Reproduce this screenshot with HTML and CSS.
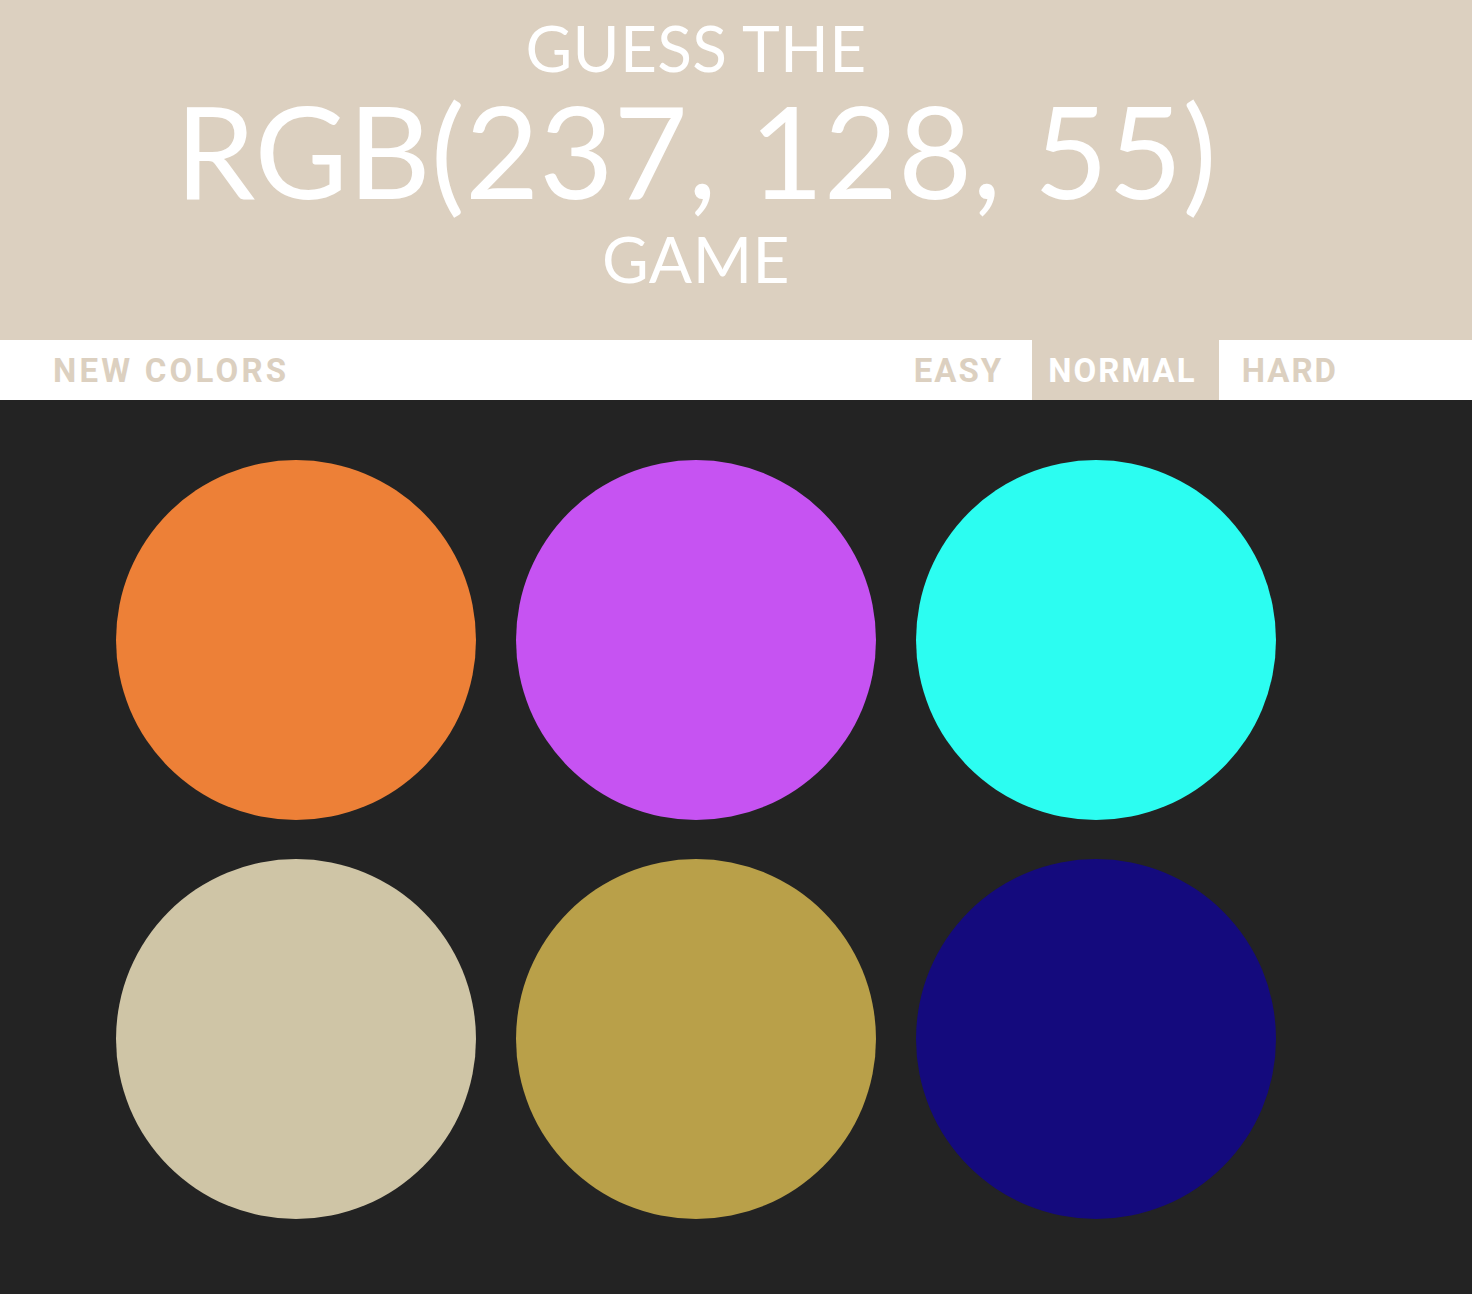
FILE: index.html
```html
<!DOCTYPE html>
<html lang="en">
<head>
<meta charset="utf-8">
<title>Colour Game</title>
<link rel="stylesheet" href="styles.css">
</head>
<body>
  <header class="header">
    <div class="frame">
      <h1 class="title">
        <span class="title-small">GUESS THE</span>
        <span class="title-big">RGB(237, 128, 55)</span>
        <span class="title-game">GAME</span>
      </h1>
    </div>
  </header>
  <nav class="nav">
    <div class="frame nav-inner">
      <button class="btn btn-new">NEW COLORS</button>
      <span class="msg"></span>
      <div class="modes">
        <button class="btn">EASY</button>
        <button class="btn btn-active">NORMAL</button>
        <button class="btn">HARD</button>
      </div>
    </div>
  </nav>
  <main class="frame board">
    <div class="grid">
      <div class="square c1"></div>
      <div class="square c2"></div>
      <div class="square c3"></div>
      <div class="square c4"></div>
      <div class="square c5"></div>
      <div class="square c6"></div>
    </div>
  </main>
</body>
</html>
```
FILE: styles.css
```css
html, body {
  margin: 0;
  padding: 0;
}
body {
  background: #232323;
  font-family: "Lato", "Noto Sans", sans-serif;
  min-height: 1294px;
}
.frame {
  width: 1392px;
}
.header {
  background: #dcd0c0;
  padding: 9px 0 36px;
}
.title {
  margin: 0;
  color: #ffffff;
  text-align: center;
  font-weight: 400;
}
.title span {
  display: block;
}
.title-small {
  font-size: 64px;
  line-height: 77px;
  letter-spacing: 0.3px;
}
.title-big {
  font-size: 128px;
  line-height: 128px;
}
.title-game {
  font-size: 64px;
  line-height: 90px;
  letter-spacing: 0.5px;
}
.nav {
  background: #ffffff;
  height: 60px;
}
.nav-inner {
  display: flex;
  align-items: stretch;
  height: 60px;
  padding-left: 37px;
  box-sizing: border-box;
}
.msg {
  flex: 1;
}
.modes {
  display: flex;
  align-items: stretch;
  gap: 7px;
  margin-right: 32px;
}
.btn {
  border: none;
  background: transparent;
  font-family: "Roboto", "Liberation Sans", sans-serif;
  font-weight: 700;
  font-size: 33px;
  letter-spacing: 2px;
  color: #dcd0c0;
  padding: 0 22px 0 16px;
  margin: 0;
  height: 60px;
  cursor: pointer;
}
.btn-new {
  letter-spacing: 3.2px;
}
.btn-active {
  background: #dcd0c0;
  color: #ffffff;
}
.board {
  padding-top: 60px;
}
.grid {
  width: 1160px;
  margin: 0 auto;
  display: grid;
  grid-template-columns: repeat(3, 360px);
  column-gap: 40px;
  row-gap: 39px;
}
.square {
  width: 360px;
  height: 360px;
  border-radius: 50%;
}
.c1 { background: #ed8037; }
.c2 { background: #c653f2; }
.c3 { background: #2cfdf1; }
.c4 { background: #cfc5a6; }
.c5 { background: #b9a049; }
.c6 { background: #140a7d; }
```
